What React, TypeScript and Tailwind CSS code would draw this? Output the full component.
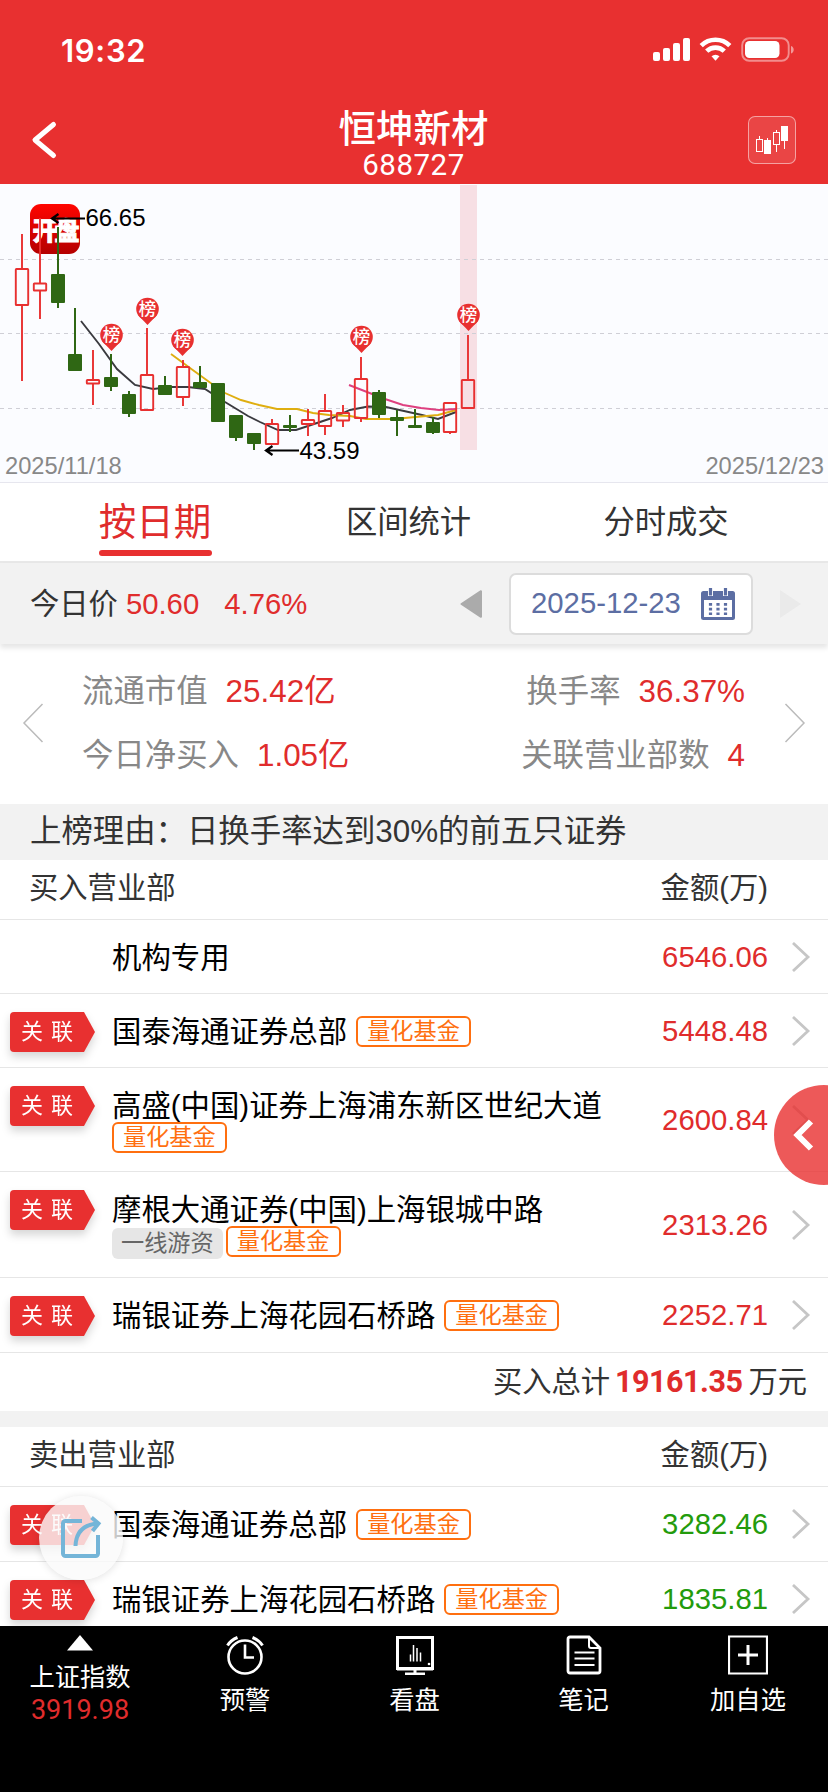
import * as React from "react";
import clsx from "clsx";

type Candle = { x: number; high: number; top: number; bottom: number; low: number; up?: boolean };

/* Candle geometry in chart pixels */
const CANDLES: Candle[] = [
  { x: 22, high: 50, top: 85, bottom: 121, low: 197, up: true },
  { x: 40, high: 34, top: 99.5, bottom: 106.5, low: 135, up: true },
  { x: 58, high: 43, top: 90, bottom: 119, low: 124 },
  { x: 75, high: 124, top: 170, bottom: 187, low: 187 },
  { x: 93, high: 166, top: 196, bottom: 199.5, low: 221, up: true },
  { x: 111, high: 170, top: 193, bottom: 203, low: 207 },
  { x: 129, high: 207, top: 210, bottom: 230, low: 233 },
  { x: 147, high: 144, top: 191, bottom: 226, low: 226, up: true },
  { x: 165, high: 192, top: 201, bottom: 211, low: 211 },
  { x: 183, high: 176, top: 183, bottom: 213, low: 222, up: true },
  { x: 200, high: 182, top: 198, bottom: 204, low: 204 },
  { x: 218, high: 199, top: 199, bottom: 238, low: 238 },
  { x: 236, high: 231, top: 231, bottom: 254, low: 257 },
  { x: 254, high: 249, top: 249, bottom: 260, low: 266 },
  { x: 272, high: 235, top: 240, bottom: 260, low: 260, up: true },
  { x: 290, high: 231, top: 241, bottom: 244, low: 248 },
  { x: 308, high: 225, top: 236, bottom: 240, low: 252, up: true },
  { x: 325, high: 210, top: 227, bottom: 242, low: 251, up: true },
  { x: 343, high: 221, top: 229, bottom: 236.5, low: 243, up: true },
  { x: 361, high: 173, top: 195, bottom: 234, low: 238, up: true },
  { x: 379, high: 206, top: 208, bottom: 231, low: 234 },
  { x: 397, high: 226, top: 233, bottom: 237, low: 252 },
  { x: 415, high: 225, top: 241, bottom: 244, low: 244 },
  { x: 433, high: 233, top: 238, bottom: 249, low: 250 },
  { x: 450, high: 219, top: 219, bottom: 248, low: 250, up: true },
  { x: 468, high: 151, top: 196, bottom: 224, low: 224, up: true },
];

const PINS = [
  { x: 111.5, y: 151 },
  { x: 147.5, y: 125 },
  { x: 182.5, y: 156 },
  { x: 361.5, y: 153 },
  { x: 468.5, y: 131 },
];

const MA_BLACK =
  "81,137 99,160 117,185 135,201 153,205 171,203 188,203 205,205 225,218 248,232 260,238 278,246 296,246 314,240 332,234 350,226 368,222.5 386,223 404,227 422,231 438,235 456,228";
const MA_YELLOW =
  "171,170 190,184 212,200 225,209 241,216 259,221 277,225 297,225 313,229 329,231 350,232 366,235 394,235 421,232.5 438,231 456,226";
const MA_PINK = "349,201 367,208 385,215 403,221 421,224 439,226 456,225";

type Tag = { label: string; kind: "quant" | "hot" };
type Broker = { name: string; linked?: boolean; tags: Tag[]; wrap?: boolean; amount: string; height: string };

const QUANT: Tag = { label: "量化基金", kind: "quant" };
const HOT: Tag = { label: "一线游资", kind: "hot" };

const BUYERS: Broker[] = [
  { name: "机构专用", tags: [], amount: "6546.06", height: "h-[74px]" },
  { name: "国泰海通证券总部", linked: true, tags: [QUANT], amount: "5448.48", height: "h-[74px]" },
  { name: "高盛(中国)证券上海浦东新区世纪大道", linked: true, tags: [QUANT], wrap: true, amount: "2600.84", height: "h-[104px]" },
  { name: "摩根大通证券(中国)上海银城中路", linked: true, tags: [HOT, QUANT], wrap: true, amount: "2313.26", height: "h-[106px]" },
  { name: "瑞银证券上海花园石桥路", linked: true, tags: [QUANT], amount: "2252.71", height: "h-[75px]" },
];

const SELLERS: Broker[] = [
  { name: "国泰海通证券总部", linked: true, tags: [QUANT], amount: "3282.46", height: "h-[75px]" },
  { name: "瑞银证券上海花园石桥路", linked: true, tags: [QUANT], amount: "1835.81", height: "h-[75px]" },
];

function StatusBar() {
  return (
    <div className="flex h-[98px] items-center justify-between pl-[61px] pr-[33px] pt-[2px]">
      <span className="font-['Inter'] text-[31px] font-semibold leading-none tracking-[0.7px]">19:32</span>
      <svg width="142" height="26" viewBox="0 0 142 26" fill="#fff">
        <rect x="0" y="15" width="7" height="9" rx="2" />
        <rect x="10" y="11" width="7" height="13" rx="2" />
        <rect x="20" y="6" width="7" height="18" rx="2" />
        <rect x="30" y="1" width="7" height="23" rx="2" />
        <g fill="none" stroke="#fff" strokeWidth="4.6">
          <path d="M48.2 8.6a20.5 20.5 0 0 1 28.6 0" />
          <path d="M53.7 14.2a12.6 12.6 0 0 1 17.6 0" />
        </g>
        <path d="M58.5 19.2a6 6 0 0 1 8 0L62.500 23.8z" />
        <rect x="89.200" y="1.200" width="46.500" height="22.600" rx="7" fill="none" stroke="#fff" strokeOpacity=".45" strokeWidth="1.900" />
        <rect x="92" y="4" width="34.500" height="17" rx="4.500" />
        <path d="M138 9c3.600 1 3.600 6.500 0 7.500z" opacity=".5" />
      </svg>
    </div>
  );
}

function Header() {
  return (
    <header className="h-[184px] bg-[#e83030] text-white">
      <StatusBar />
      <div className="flex h-[86px] items-start justify-between pl-[30px] pr-[32px]">
        <svg width="30" height="44" viewBox="0 0 30 44" className="mt-[20px]" fill="none" stroke="#fff" strokeWidth="5" strokeLinecap="round" strokeLinejoin="round">
          <path d="M23.500 6.500 5 22l18.500 15.500" />
        </svg>
        <div className="ml-[19px] flex flex-col items-center pt-[9px]">
          <h1 className="text-[37.5px] font-medium leading-[44px]">恒坤新材</h1>
          <p className="mt-[1px] font-['Roboto'] text-[29.500px] leading-[26px] tracking-[0.5px]">688727</p>
        </div>
        <div className="mt-[18px] flex h-[48px] w-[48px] items-center justify-center rounded-[7px] border border-white/50 bg-white/10">
          <svg width="32" height="30" viewBox="0 0 32 30" fill="none" stroke="#fff" strokeWidth="1">
            <path d="M3.500 11v4M11.500 13v3M20.500 5v3M20.500 20v7M28.500 15v9" />
            <rect x=".5" y="14.500" width="6" height="12" />
            <rect x="8.500" y="15.500" width="6" height="13" fill="#fff" />
            <rect x="17.500" y="7.500" width="6" height="12" />
            <rect x="25.500" y="1.500" width="6" height="14" fill="#fff" />
          </svg>
        </div>
      </div>
    </header>
  );
}

function KLineChart() {
  return (
    <svg width="828" height="299" viewBox="0 0 828 299" className="block shrink-0 bg-[#fbfcff] font-['Liberation_Sans','Noto_Sans_CJK_SC',sans-serif]">
      <defs>
        <linearGradient id="open-badge" x1="0" y1="0" x2="0" y2="1">
          <stop offset="0" stopColor="#ff0500" />
          <stop offset="1" stopColor="#b40000" />
        </linearGradient>
      </defs>

      <rect x="460" y="1" width="17" height="265" fill="#f7dfe4" />
      <g stroke="#cfcfd6" strokeDasharray="4 4">
        <path d="M0 75.500H828M0 149.500H828M0 224.500H828" />
      </g>

      <rect x="30" y="20" width="50" height="50" rx="11" fill="url(#open-badge)" />
      <text x="32.500" y="55.500" fill="#fff" stroke="#fff" strokeWidth=".8" fontSize="25" fontWeight="900" letterSpacing="-3">开盘</text>

      <g fill="none" strokeWidth="1.900">
        <polyline points={MA_BLACK} stroke="#3a3a3f" />
        <polyline points={MA_YELLOW} stroke="#dfae10" />
        <polyline points={MA_PINK} stroke="#de4080" />
      </g>

      {CANDLES.map((c) =>
        c.up ? (
          <g key={c.x} stroke="#e83030" strokeWidth="1.900" fill="none">
            <path d={`M${c.x} ${c.high}V${c.top}M${c.x} ${c.bottom}V${c.low}`} />
            <rect x={c.x - 6.2} y={c.top} width="12.400" height={c.bottom - c.top} rx=".6" />
          </g>
        ) : (
          <g key={c.x} fill="#2f6714">
            <rect x={c.x - 1} y={c.high} width="2" height={c.low - c.high} />
            <rect x={c.x - 7} y={c.top} width="14" height={c.bottom - c.top} rx="1" />
          </g>
        ),
      )}

      {PINS.map((p) => (
        <g key={p.x}>
          <path d={`M${p.x - 9} ${p.y + 6.500}L${p.x} ${p.y + 16}L${p.x + 9} ${p.y + 6.500}z`} fill="#e83030" />
          <circle cx={p.x} cy={p.y} r="11.300" fill="#e83030" />
          <text x={p.x} y={p.y + 6} textAnchor="middle" fill="#fff" fontSize="17.500" fontWeight="500">榜</text>
        </g>
      ))}

      <g fill="none" stroke="#000" strokeWidth="2.200">
        <path d="M85 34.500H52M58.500 30 52 34.500l6.500 4.500M299 266.500H266M272.500 262l-6.500 4.500 6.500 4.500" />
      </g>
      <g fontSize="24">
        <text x="85.500" y="42">66.65</text>
        <text x="299.500" y="275">43.59</text>
      </g>
      <g fontSize="23.700" fill="#888">
        <text x="5" y="290">2025/11/18</text>
        <text x="824" y="290" textAnchor="end">2025/12/23</text>
      </g>
      <path d="M0 298.500H828" stroke="#e6e6ee" />
    </svg>
  );
}

function Tabs() {
  return (
    <nav className="flex h-[80px] shrink-0 border-b-2 border-[#e8e8e8] bg-white text-[31.300px] text-[#333]">
      <div className="flex w-[310px] flex-col items-center">
        <span className="mt-[11px] text-[37.500px] leading-[56px] text-[#e02c2c]">按日期</span>
        <i className="h-[6px] w-[113px] rounded-[3px] bg-[#e83030]" />
      </div>
      <div className="w-[197px] text-center leading-[79px]">区间统计</div>
      <div className="w-[318px] text-center leading-[79px]">分时成交</div>
    </nav>
  );
}

function CalendarIcon() {
  return (
    <svg width="34" height="32" viewBox="0 0 34 32">
      <rect x="0" y="3" width="34" height="29" rx="2.500" fill="#5c6ea3" />
      <rect x="3" y="12" width="28" height="17" fill="#fff" />
      <path d="M9.500 0v8M24.500 0v8" stroke="#fff" strokeWidth="5" />
      <path d="M9.500 0v7.500M24.500 0v7.500" stroke="#5c6ea3" strokeWidth="3.200" />
      <path d="M9.500 15V27.500M17 15V27.500M24.500 15V27.500" stroke="#5c6ea3" strokeWidth="3.200" strokeDasharray="2.700 2" />
    </svg>
  );
}

function DateBar() {
  return (
    <div className="relative flex h-[81px] shrink-0 items-center bg-[#f2f2f2] pl-[30px] pr-[27px] shadow-[0_4px_5px_rgba(0,0,0,0.1)]">
      <div className="flex flex-1 items-center text-[29.300px] leading-none text-[#e02c2c]">
        <span className="mr-[8px] text-[#333]">今日价</span>
        <span className="mr-[25px]">50.60</span>
        <span>4.76%</span>
      </div>
      <svg width="23" height="28" viewBox="0 0 23 28" fill="#ababab" stroke="#ababab" strokeWidth="2" strokeLinejoin="round">
        <path d="M1.500 14 21 1.200v25.600z" />
      </svg>
      <div className="ml-[26px] mr-[27px] flex h-[62px] w-[244px] items-center rounded-[7px] border-2 border-[#dcdcdc] bg-white pl-[20px] pr-[16px]">
        <span className="flex-1 pb-[1px] text-[29.300px] leading-none text-[#5c6ea3]">2025-12-23</span>
        <CalendarIcon />
      </div>
      <svg width="21" height="28" viewBox="0 0 21 28" fill="#eaeaea">
        <path d="M0 0v28L21 14z" />
      </svg>
    </div>
  );
}

function Stat({ label, value }: { label: string; value: string }) {
  return (
    <div className="flex items-center gap-[18px]">
      <span className="text-[#888]">{label}</span>
      <span className="text-[#e02c2c]">{value}</span>
    </div>
  );
}

function Stats() {
  return (
    <section className="flex h-[160px] shrink-0 items-start justify-between bg-white px-[22px] text-[31.400px] leading-[64px]">
      <svg width="22" height="40" viewBox="0 0 22 40" className="mt-[59px]" fill="none" stroke="#bbb" strokeWidth="1.500">
        <path d="M20.500 1 2 20l18.500 19" />
      </svg>
      <div className="ml-[38px] flex-1 pt-[16px]">
        <Stat label="流通市值" value="25.42亿" />
        <Stat label="今日净买入" value="1.05亿" />
      </div>
      <div className="mr-[39px] flex flex-col items-end pt-[16px]">
        <Stat label="换手率" value="36.37%" />
        <Stat label="关联营业部数" value="4" />
      </div>
      <svg width="22" height="40" viewBox="0 0 22 40" className="mt-[59px]" fill="none" stroke="#bbb" strokeWidth="1.500">
        <path d="M1.500 1 20 20 1.500 39" />
      </svg>
    </section>
  );
}

function TableHead({ title }: { title: string }) {
  return (
    <div className="flex h-[60px] items-center justify-between border-b border-[#e6e6e6] bg-white pl-[29px] pr-[60px] pb-[3px] text-[29.300px] leading-none text-[#333]">
      <span>{title}</span>
      <span>金额(万)</span>
    </div>
  );
}

function LinkedBadge() {
  return (
    <div className="ml-[10px] mt-[18px] h-[40px] w-[85px] drop-shadow-[0_5px_4px_rgba(0,0,0,0.16)]">
      <div className="h-full rounded-l-[4px] bg-[#e83030] pl-[11px] text-[22px] leading-[40px] tracking-[8px] text-white [clip-path:polygon(0_0,74px_0,85px_50%,74px_100%,0_100%)]">
        关联
      </div>
    </div>
  );
}

function TagChip({ tag }: { tag: Tag }) {
  return (
    <span
      className={clsx(
        "flex h-[31px] items-center rounded-[6px] text-[23.200px] leading-none",
        tag.kind === "quant"
          ? "border-2 border-[#ff6f0f] bg-white px-[9px] text-[#ff6f0f]"
          : "mr-[3px] mt-[2px] bg-[#e6e6e6] px-[9px] text-[#666]",
      )}
    >
      {tag.label}
    </span>
  );
}

function BrokerRow({ broker, sell }: { broker: Broker; sell?: boolean }) {
  return (
    <div className={clsx("flex shrink-0 border-b border-[#e6e6e6] bg-white", broker.height)}>
      <div className="w-[112px]">{broker.linked && <LinkedBadge />}</div>
      <div className={clsx("flex flex-1 pt-[16px]", broker.wrap ? "flex-col" : "items-start")}>
        <span className="text-[29.400px] leading-[44px] text-black">{broker.name}</span>
        <div className={clsx("flex items-start", broker.wrap ? "-mt-[6px]" : "ml-[9px] pt-[6px]")}>
          {broker.tags.map((tag) => (
            <TagChip key={tag.label} tag={tag} />
          ))}
        </div>
      </div>
      <div className="flex items-center">
        <span className={clsx("text-[29.300px] leading-none", sell ? "text-[#239b0c]" : "text-[#e02c2c]")}>{broker.amount}</span>
        <svg width="20" height="30" viewBox="0 0 20 30" className="ml-[23px] mr-[17px]" fill="none" stroke="#c6c6c6" strokeWidth="2.800">
          <path d="M2 1l15 14L2 29" />
        </svg>
      </div>
    </div>
  );
}

function BuyTotal() {
  return (
    <div className="flex h-[58px] items-center justify-end bg-white pr-[21px] text-[29.300px] leading-none text-[#333]">
      <span>买入总计</span>
      <b className="mr-[6px] ml-[5px] pt-[1px] font-['Roboto'] text-[30.500px] font-bold tracking-[-0.500px] text-[#e02c2c]">19161.35</b>
      <span>万元</span>
    </div>
  );
}

const NAV_ICONS: Record<string, React.ReactNode> = {
  预警: (
    <>
      <circle cx="20" cy="22" r="16.500" strokeWidth="2.600" />
      <path d="M20 9.500V22.500h9" strokeWidth="2.600" />
      <path d="M2.500 10.500Q6 5 12.500 2.500M37.500 10.500Q34 5 27.500 2.500" strokeWidth="3" />
    </>
  ),
  看盘: (
    <>
      <path d="M2.500 2.500H37.500V33.500H2.500z" strokeWidth="3" />
      <path d="M2 34h36M20 34v5M10 39h20" strokeWidth="3" />
      <path d="M15.500 26.500v-7M18.500 26.500V10M22 26.500V13M25.500 26.500v-9" strokeWidth="1.500" />
      <circle cx="34" cy="29" r="1.300" fill="#fff" stroke="none" />
    </>
  ),
  笔记: (
    <>
      <path d="M6 2h19l11 11v23a2 2 0 0 1-2 2H6a2 2 0 0 1-2-2V4a2 2 0 0 1 2-2z" strokeWidth="2.800" />
      <path d="M25 2v9a2 2 0 0 0 2 2h9" strokeWidth="2" />
      <path d="M10.500 17.500h20M10.500 23.500h20M10.500 30h20" strokeWidth="2" />
    </>
  ),
  加自选: (
    <>
      <path d="M1 1.500H39V38.500H1z" strokeWidth="2.200" />
      <path d="M20 10v20M10 20h20" strokeWidth="3" />
    </>
  ),
};

function NavItem({ label, className }: { label: string; className: string }) {
  return (
    <div className={clsx("flex flex-col items-center pt-[9px]", className)}>
      <svg width="40" height="40" viewBox="0 0 40 40" fill="none" stroke="#fff">
        {NAV_ICONS[label]}
      </svg>
      <span className="mt-[11px] text-[25.300px] leading-[28px]">{label}</span>
    </div>
  );
}

function BottomNav() {
  return (
    <footer className="flex h-[166px] shrink-0 bg-black text-white">
      <div className="flex w-[160px] flex-col items-center pt-[9px]">
        <svg width="26" height="16" viewBox="0 0 26 16" fill="#fff">
          <path d="M13 0 26 15.500H0z" />
        </svg>
        <span className="mt-[12px] text-[25.300px] leading-[28px]">上证指数</span>
        <span className="mt-[5px] font-['Roboto'] text-[27px] leading-[28px] text-[#e02c2c]">3919.98</span>
      </div>
      <NavItem label="预警" className="w-[170px]" />
      <NavItem label="看盘" className="w-[169px]" />
      <NavItem label="笔记" className="w-[169px]" />
      <NavItem label="加自选" className="w-[160px]" />
    </footer>
  );
}

export default function App() {
  return (
    <div className="relative flex h-[1792px] w-[828px] flex-col overflow-hidden bg-[#f2f2f2] font-['Liberation_Sans','Noto_Sans_CJK_SC',sans-serif]">
      <Header />
      <KLineChart />
      <Tabs />
      <DateBar />
      <Stats />
      <div className="h-[56px] shrink-0 bg-[#f2f2f2] pl-[30px] text-[31.400px] leading-[55px] text-[#333]">
        上榜理由：日换手率达到30%的前五只证券
      </div>

      {/* Broker tables, cut off by the bottom nav */}
      <main className="flex-1 overflow-hidden">
        <TableHead title="买入营业部" />
        {BUYERS.map((b) => (
          <BrokerRow key={b.name} broker={b} />
        ))}
        <BuyTotal />
        <div className="h-[16px] bg-[#f2f2f2]" />
        <TableHead title="卖出营业部" />
        {SELLERS.map((b) => (
          <BrokerRow key={b.name} broker={b} sell />
        ))}
      </main>
      <BottomNav />

      {/* Side drawer handle */}
      <button aria-label="展开" className="absolute left-[774px] top-[1085px] h-[100px] w-[100px] rounded-full bg-[#e83030]/80 pl-[18px]">
        <svg width="22" height="34" viewBox="0 0 22 34" fill="none" stroke="#fff" strokeWidth="6">
          <path d="M19 3.500 5.500 17 19 30.500" />
        </svg>
      </button>

      {/* Floating share button */}
      <button aria-label="分享" className="absolute left-[39px] top-[1496px] flex h-[84px] w-[84px] items-center justify-center rounded-full bg-[#fafafa]/80 pb-[3px] shadow-[0_1px_8px_rgba(0,0,0,0.12)]">
        <svg width="42" height="42" viewBox="0 0 42 42" fill="none" stroke="#74b5d8" strokeWidth="4">
          <path d="M22 5H5.500a2.500 2.500 0 0 0-2.500 2.500v30A2.500 2.500 0 0 0 5.500 40h30a2.500 2.500 0 0 0 2.500-2.500V19" />
          <path d="M15.500 30C16 18 22 8.500 38 7.500M31.500 1.500 38.500 7.500l-6 7.500" />
        </svg>
      </button>
    </div>
  );
}
